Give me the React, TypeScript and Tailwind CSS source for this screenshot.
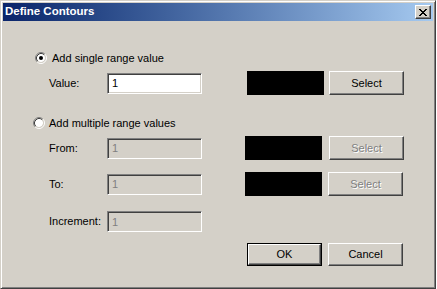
import React from "react";

const face = "bg-[#d4d0c8]";
const raised =
  "border border-t-white border-l-white border-r-[#404040] border-b-[#404040] shadow-[inset_-1px_-1px_#808080] bg-[#d4d0c8]";
const sunken =
  "border border-t-[#808080] border-l-[#808080] border-r-white border-b-white shadow-[inset_1px_1px_#404040,inset_-1px_-1px_#d4d0c8]";

function Radio({ checked }: { checked?: boolean }) {
  return (
    <svg width="12" height="12" viewBox="0 0 12 12" className="shrink-0">
      <circle cx="6" cy="6" r="4" fill="#fff" />
      <path d="M2.11 9.89 A5.5 5.5 0 0 1 9.89 2.11" stroke="#808080" fill="none" />
      <path d="M9.89 2.11 A5.5 5.5 0 0 1 2.11 9.89" stroke="#fff" fill="none" />
      <path d="M2.82 9.18 A4.5 4.5 0 0 1 9.18 2.82" stroke="#404040" fill="none" />
      <path d="M9.18 2.82 A4.5 4.5 0 0 1 2.82 9.18" stroke="#d4d0c8" fill="none" />
      {checked && <circle cx="6" cy="6" r="2" fill="#000" />}
    </svg>
  );
}

function CloseGlyph() {
  const px = [
    [0, 0], [1, 0], [6, 0], [7, 0],
    [1, 1], [2, 1], [5, 1], [6, 1],
    [2, 2], [3, 2], [4, 2], [5, 2],
    [3, 3], [4, 3],
    [2, 4], [3, 4], [4, 4], [5, 4],
    [1, 5], [2, 5], [5, 5], [6, 5],
    [0, 6], [1, 6], [6, 6], [7, 6],
  ];
  return (
    <svg width="8" height="7" viewBox="0 0 8 7" shapeRendering="crispEdges">
      {px.map(([x, y]) => (
        <rect key={`${x}-${y}`} x={x} y={y} width="1" height="1" fill="#000" />
      ))}
    </svg>
  );
}

function Field({ value, disabled }: { value: string; disabled?: boolean }) {
  return (
    <input
      defaultValue={value}
      disabled={disabled}
      className={`${sunken} w-[95px] h-[21px] pl-[4px] text-[11px] outline-none ${
        disabled ? "bg-[#d4d0c8] text-[#808080]" : "bg-white text-black"
      }`}
    />
  );
}

function Swatch() {
  return <div className="w-[77px] h-[24px] bg-black shrink-0" />;
}

function Btn({ label, disabled }: { label: string; disabled?: boolean }) {
  return (
    <button
      disabled={disabled}
      className={`${raised} w-[75px] h-[24px] text-[11px] flex items-center justify-center ${
        disabled ? "text-[#808080] [text-shadow:1px_1px_0_#fff]" : "text-black"
      }`}
    >
      {label}
    </button>
  );
}

export default function App() {
  return (
    <div className="w-[436px] h-[289px] font-['Liberation_Sans',Arial,sans-serif] text-[11px] text-black">
      <div className={`w-full h-full border border-t-[#d4d0c8] border-l-[#d4d0c8] border-r-[#404040] border-b-[#404040] shadow-[inset_1px_1px_#fff,inset_-1px_-1px_#808080] p-[2px] ${face} flex flex-col`}>
        {/* title bar */}
        <div className="h-[18px] flex items-center justify-between pl-[2px] pr-[2px] bg-gradient-to-r from-[#0a246a] to-[#a6caf0]">
          <span className="text-white font-bold text-[11.5px] leading-none">Define Contours</span>
          <div className={`${raised} w-[16px] h-[14px] flex items-center justify-center`}>
            <CloseGlyph />
          </div>
        </div>

        {/* body */}
        <div className="flex flex-col">
          <div className="mt-[31px] ml-[32px] h-[12px] flex items-center gap-[5px]">
            <Radio checked />
            <span>Add single range value</span>
          </div>

          <div className="mt-[7px] ml-[46px] h-[24px] flex items-center">
            <span className="w-[58px]">Value:</span>
            <Field value="1" />
            <div className="ml-[45px]">
              <Swatch />
            </div>
            <div className="ml-[5px]">
              <Btn label="Select" />
            </div>
          </div>

          <div className="mt-[22px] ml-[30px] h-[12px] flex items-center gap-[4px]">
            <Radio />
            <span>Add multiple range values</span>
          </div>

          <div className="mt-[7px] ml-[46px] h-[24px] flex items-center">
            <span className="w-[58px]">From:</span>
            <Field value="1" disabled />
            <div className="ml-[43px]">
              <Swatch />
            </div>
            <div className="ml-[7px]">
              <Btn label="Select" disabled />
            </div>
          </div>

          <div className="mt-[12px] ml-[46px] h-[24px] flex items-center">
            <span className="w-[58px]">To:</span>
            <Field value="1" disabled />
            <div className="ml-[43px]">
              <Swatch />
            </div>
            <div className="ml-[6px]">
              <Btn label="Select" disabled />
            </div>
          </div>

          <div className="mt-[15px] ml-[46px] h-[21px] flex items-center">
            <span className="w-[58px]">Increment:</span>
            <Field value="1" disabled />
          </div>

          <div className="mt-[11px] ml-[244px] h-[23px] flex items-center gap-[6px]">
            <div className="border border-black">
              <button className={`${raised} w-[73px] h-[21px] text-[11px] flex items-center justify-center`}>
                OK
              </button>
            </div>
            <button className={`${raised} w-[75px] h-[23px] text-[11px] flex items-center justify-center`}>
              Cancel
            </button>
          </div>
        </div>
      </div>
    </div>
  );
}
